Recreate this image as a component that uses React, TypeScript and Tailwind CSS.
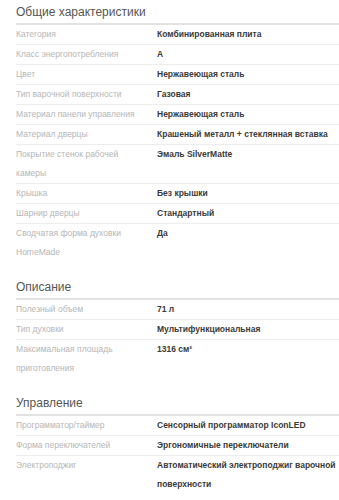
type Spec = { label: string; value: string }

const sections: { title: string; rows: Spec[] }[] = [
  {
    title: "Общие характеристики",
    rows: [
      { label: "Категория", value: "Комбинированная плита" },
      { label: "Класс энергопотребления", value: "A" },
      { label: "Цвет", value: "Нержавеющая сталь" },
      { label: "Тип варочной поверхности", value: "Газовая" },
      { label: "Материал панели управления", value: "Нержавеющая сталь" },
      { label: "Материал дверцы", value: "Крашеный металл + стеклянная вставка" },
      { label: "Покрытие стенок рабочей камеры", value: "Эмаль SilverMatte" },
      { label: "Крышка", value: "Без крышки" },
      { label: "Шарнир дверцы", value: "Стандартный" },
      { label: "Сводчатая форма духовки HomeMade", value: "Да" },
    ],
  },
  {
    title: "Описание",
    rows: [
      { label: "Полезный объем", value: "71 л" },
      { label: "Тип духовки", value: "Мультифункциональная" },
      { label: "Максимальная площадь приготовления", value: "1316 см²" },
    ],
  },
  {
    title: "Управление",
    rows: [
      { label: "Программатор/таймер", value: "Сенсорный программатор IconLED" },
      { label: "Форма переключателей", value: "Эргономичные переключатели" },
      { label: "Электроподжиг", value: "Автоматический электроподжиг варочной поверхности" },
    ],
  },
]

const App = () => {
  return (
    <div className="min-h-screen bg-white pl-4 pt-[2px] font-['Liberation_Sans',Arial,sans-serif]">
      {sections.map((section) => (
        <div key={section.title} className="mb-[15px]">
          <h2 className="text-[12px] leading-5 text-[#555] pb-[1px] border-b-2 border-[#e2e2e2]">
            {section.title}
          </h2>
          <div>
            {section.rows.map((row, i) => (
              <div
                key={row.label}
                className={
                  "flex text-[8.5px] leading-[19px] " +
                  (i < section.rows.length - 1 ? "border-b border-[#ededed]" : "")
                }
              >
                <div className="w-[141px] shrink-0 pr-[21px] text-[#b6b6b6]">{row.label}</div>
                <div className="flex-1 font-bold text-[#3a3a3a]">{row.value}</div>
              </div>
            ))}
          </div>
        </div>
      ))}
    </div>
  )
}

export default App
